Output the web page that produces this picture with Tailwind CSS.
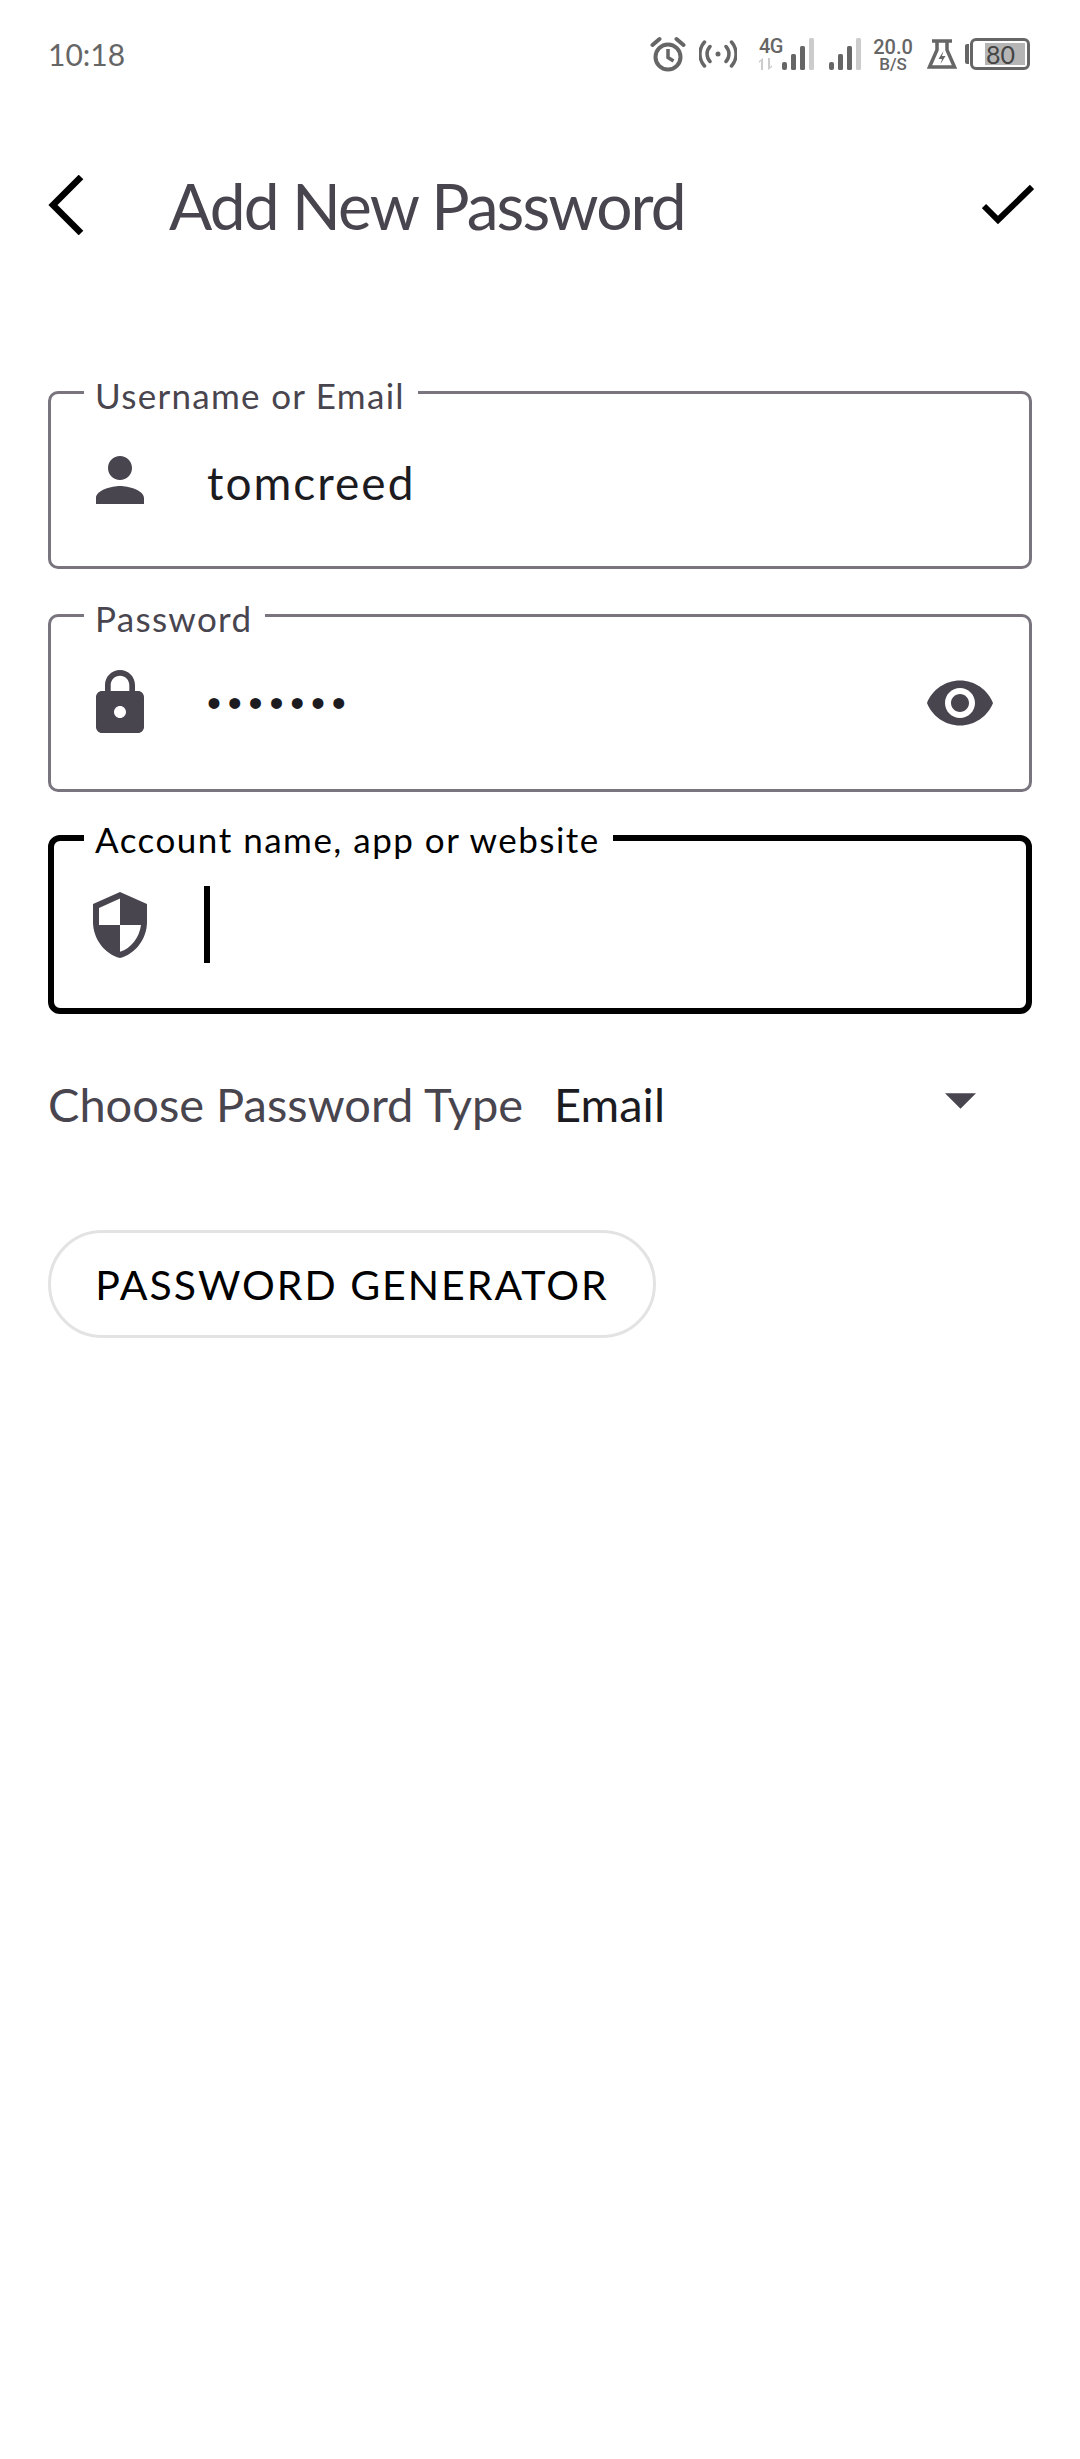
<!DOCTYPE html>
<html lang="en">
<head>
  <meta charset="UTF-8">
  <meta name="viewport" content="width=device-width, initial-scale=1.0">
  <title>Add New Password</title>
  <script src="https://cdn.jsdelivr.net/npm/@tailwindcss/browser@4"></script>
</head>
<body class="bg-white font-['Lato',sans-serif] w-[1080px] h-[2459px] overflow-hidden">
  <!-- Status bar -->
  <div class="h-[108px] pl-[48px] pr-[50px] flex items-center justify-end text-[#666666]">
    <span class="mr-auto text-[30px] leading-none">10:18</span>
    <svg class="w-[36px] h-[36px]" viewBox="0 0 36 36" fill="none" stroke="#666666" stroke-width="4">
      <circle cx="18" cy="21" r="12.5"/>
      <path d="M18 13v8.5l5.5 3.5" stroke-width="3.5"/>
      <path d="M2.5 9 9.5 3M33.5 9 26.500 3" stroke-linecap="round"/>
    </svg>
    <svg class="ml-[13px] w-[38px] h-[28px]" viewBox="0 0 38 28" fill="none" stroke="#666666" stroke-width="3.500" stroke-linecap="round">
      <circle cx="19" cy="14" r="2.500" fill="#666666" stroke="none"/>
      <path d="M11 6.500a11 11 0 0 0 0 15M27 6.500a11 11 0 0 1 0 15M5.500 2a18 18 0 0 0 0 24M32.500 2a18 18 0 0 1 0 24"/>
    </svg>
    <div class="ml-[22px] w-[25px] h-[32px] flex flex-col items-start font-['Roboto',sans-serif] font-medium">
      <span class="text-[20px] leading-[17px] tracking-[-0.5px]">4G</span>
      <svg class="mt-[3px] w-[16px] h-[12px]" viewBox="0 0 16 12" fill="#cccccc"><path d="M4 0v12H2V3L0 5V3zM9 0h2v9l2-2v2l-4 3z"/></svg>
    </div>
    <svg class="ml-[-2px] w-[32px] h-[32px]" viewBox="0 0 32 32">
      <rect x="0" y="24" width="5" height="8" rx="2" fill="#666666"/>
      <rect x="9" y="16" width="5" height="16" rx="1.500" fill="#666666"/>
      <rect x="18" y="8" width="5" height="24" rx="1.500" fill="#666666"/>
      <rect x="27" y="0" width="5" height="32" rx="1.500" fill="#cccccc"/>
    </svg>
    <svg class="ml-[15px] w-[32px] h-[32px]" viewBox="0 0 32 32">
      <rect x="0" y="24" width="5" height="8" rx="2" fill="#666666"/>
      <rect x="9" y="16" width="5" height="16" rx="1.500" fill="#666666"/>
      <rect x="18" y="8" width="5" height="24" rx="1.500" fill="#666666"/>
      <rect x="27" y="0" width="5" height="32" rx="1.500" fill="#cccccc"/>
    </svg>
    <div class="ml-[13px] w-[38px] mt-[2px] flex flex-col items-center font-['Roboto',sans-serif] font-medium">
      <span class="text-[20px] leading-[19px]">20.0</span>
      <span class="text-[17px] leading-[15px]">B/S</span>
    </div>
    <svg class="ml-[15px] w-[30px] h-[30px]" viewBox="0 0 30 30" fill="none" stroke="#666666" stroke-width="3.500">
      <path d="M5 2h20M10 2v9L2.500 28h25L20 11V2"/>
      <path d="M16.500 12 11.500 20h3.500l-1.500 5 5-8h-3.500z" fill="#666666" stroke="none"/>
    </svg>
    <div class="ml-[8px] w-[4px] h-[20px] bg-[#666666] rounded-l-[2px]"></div>
    <div class="ml-[1px] w-[60px] h-[32px] border-[3px] border-[#666666] rounded-[6px] p-[2px] pl-[12px] flex">
      <div class="flex-1 bg-[#b5b5b5] text-[#444444] text-[25px] leading-[22px] pl-[1px]">80</div>
    </div>
  </div>

  <!-- Header -->
  <div class="h-[194px] px-[48px] flex items-center">
    <svg class="w-[36px] h-[60px]" viewBox="0 0 36 60" fill="none" stroke="#000000" stroke-width="6.500">
      <path d="M33 2 5 30l28 28"/>
    </svg>
    <h1 class="ml-[85px] text-[64px] leading-none tracking-[-1.9px] text-[#49454f] mt-[2px]">Add New Password</h1>
    <svg class="ml-auto mr-[-2px] w-[52px] h-[42px]" viewBox="0 0 52 42" fill="none" stroke="#000000" stroke-width="6">
      <path d="M2 22l14 14L50 3"/>
    </svg>
  </div>

  <main class="px-[48px] mt-[89px]">
    <!-- Username -->
    <div class="relative h-[178px] border-[3px] border-[#79747e] rounded-[10px] pl-[33px] pr-[33px] flex items-center">
      <label class="absolute left-[33px] top-[-26px] h-[42px] bg-white pl-[11px] pr-[13px] pt-[6px] text-[35px] leading-[42px] tracking-[1.3px] text-[#49454f]">Username or Email</label>
      <svg class="w-[72px] h-[72px] shrink-0" viewBox="0 0 24 24" fill="#49454f"><path d="M12 12c2.210 0 4-1.790 4-4s-1.790-4-4-4-4 1.790-4 4 1.790 4 4 4zm0 2c-2.670 0-8 1.340-8 4v2h16v-2c0-2.660-5.330-4-8-4z"/></svg>
      <span class="ml-[51px] mt-[6px] text-[46px] leading-none tracking-[2px] text-[#1c1b1f]">tomcreed</span>
    </div>

    <!-- Password -->
    <div class="relative mt-[45px] h-[178px] border-[3px] border-[#79747e] rounded-[10px] pl-[33px] pr-[33px] flex items-center">
      <label class="absolute left-[33px] top-[-26px] h-[42px] bg-white pl-[11px] pr-[13px] pt-[6px] text-[35px] leading-[42px] tracking-[1.3px] text-[#49454f]">Password</label>
      <svg class="w-[72px] h-[72px] shrink-0" viewBox="0 0 24 24" fill="#49454f"><path d="M18 8h-1V6c0-2.760-2.240-5-5-5S7 3.240 7 6v2H6c-1.100 0-2 .9-2 2v10c0 1.100.9 2 2 2h12c1.100 0 2-.9 2-2V10c0-1.100-.9-2-2-2zm-6 9c-1.100 0-2-.9-2-2s.9-2 2-2 2 .9 2 2-.9 2-2 2zm3.100-9H8.900V6c0-1.710 1.390-3.100 3.100-3.100 1.710 0 3.100 1.390 3.100 3.100v2z"/></svg>
      <span class="ml-[51px] font-['Liberation_Sans',sans-serif] text-[40px] leading-none tracking-[6.800px] text-[#1c1b1f]">•••••••</span>
      <svg class="ml-auto w-[72px] h-[72px] shrink-0" viewBox="0 0 24 24" fill="#49454f"><path d="M12 4.500C7 4.500 2.730 7.610 1 12c1.730 4.390 6 7.500 11 7.500s9.270-3.110 11-7.500c-1.730-4.390-6-7.500-11-7.500zM12 17c-2.760 0-5-2.240-5-5s2.240-5 5-5 5 2.240 5 5-2.240 5-5 5zm0-8c-1.660 0-3 1.340-3 3s1.340 3 3 3 3-1.340 3-3-1.340-3-3-3z"/></svg>
    </div>

    <!-- Account name (focused) -->
    <div class="relative mt-[43px] h-[179px] border-[6px] border-black rounded-[12px] pl-[30px] flex items-center">
      <label class="absolute left-[30px] top-[-29px] h-[42px] bg-white pl-[11px] pr-[13px] pt-[6px] text-[35px] leading-[42px] tracking-[1.5px] text-black">Account name, app or website</label>
      <svg class="w-[72px] h-[72px] shrink-0" viewBox="0 0 24 24" fill="#49454f"><path d="M12 1 3 5v6c0 5.550 3.840 10.740 9 12 5.160-1.260 9-6.450 9-12V5l-9-4zm0 10.990h7c-.53 4.120-3.280 7.790-7 8.940V12H5V6.300l7-3.110v8.800z"/></svg>
      <div class="ml-[48px] w-[6px] h-[77px] bg-black"></div>
    </div>

    <!-- Type dropdown -->
    <div class="mt-[50px] h-[80px] flex items-center text-[47px] leading-none">
      <span class="text-[#49454f]">Choose Password Type</span>
      <span class="ml-[31px] text-[#1c1b1f]">Email</span>
      <svg class="ml-auto mr-[56px] w-[31px] h-[16px] mt-[-6px]" viewBox="0 0 30 15" fill="#49454f"><path d="M0 0h30L15 15z"/></svg>
    </div>

    <button class="mt-[86px] w-[608px] h-[108px] border-[3px] border-[#e3e3e3] rounded-full text-[41px] leading-none tracking-[2px] text-black">PASSWORD GENERATOR</button>
  </main>
</body>
</html>
